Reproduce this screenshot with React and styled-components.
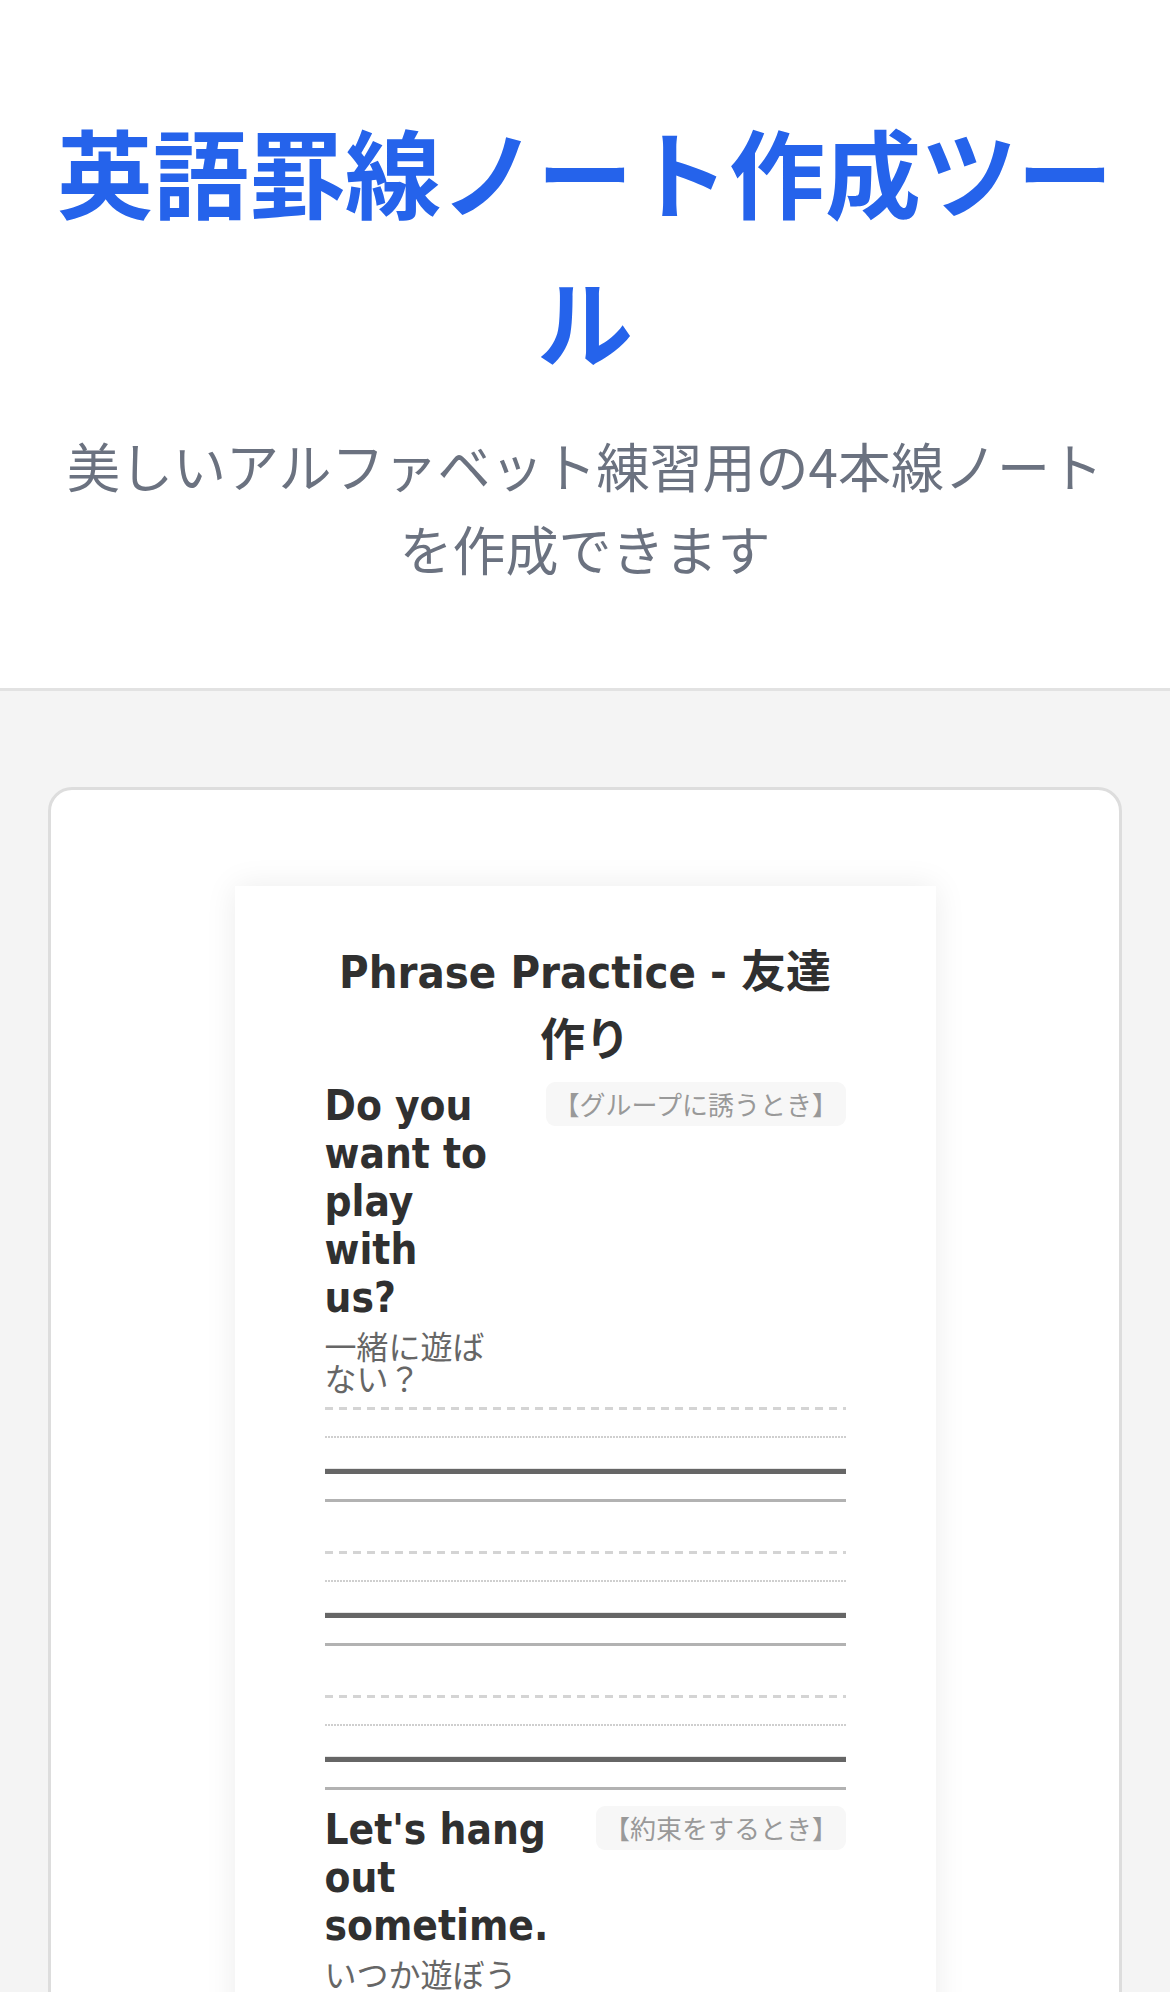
import React from "react";
import styled, { createGlobalStyle } from "styled-components";

const GlobalStyle = createGlobalStyle`
  html, body {
    margin: 0;
    padding: 0;
    background: #f4f4f4;
  }
  body {
    font-family: "Noto Sans CJK JP", "Noto Sans", sans-serif;
  }
  * { box-sizing: border-box; }
`;

const Header = styled.header`
  background: #ffffff;
  border-bottom: 3px solid #e2e2e2;
  padding: 96px 48px 98px;
  text-align: center;
`;

const Title = styled.h1`
  margin: 0 0 30px;
  font-size: 96px;
  line-height: 1.55;
  font-weight: 700;
  color: #2563eb;
`;

const Subtitle = styled.p`
  margin: 0;
  padding: 0 12px;
  font-size: 53px;
  line-height: 83px;
  color: #6b7280;
`;

const Main = styled.main`
  padding: 96px 48px;
`;

const Card = styled.section`
  background: #ffffff;
  border: 3px solid #dddddd;
  border-radius: 24px;
  padding: 96px 0;
  display: flex;
  justify-content: center;
`;

const Paper = styled.div`
  width: 701px;
  background: #ffffff;
  box-shadow: 0 0 30px rgba(0, 0, 0, 0.08);
  padding: 53px 90px 60px;
  font-family: "DejaVu Sans Condensed", "DejaVu Sans", "Noto Sans CJK JP", sans-serif;
  font-stretch: condensed;
  color: #303030;
`;

const PaperTitle = styled.h2`
  margin: 0 0 7px;
  text-align: center;
  font-size: 45px;
  line-height: 68px;
  font-weight: 700;
  color: #303030;
`;

const Phrase = styled.div`
  margin-bottom: 16px;
`;

const PhraseRow = styled.div`
  display: flex;
  align-items: flex-start;
  gap: 45px;
`;

const PhraseText = styled.div`
  flex: 1;
  min-width: 0;
`;

const English = styled.div`
  font-size: 42px;
  line-height: 48px;
  font-weight: 700;
  color: #303030;
`;

const Japanese = styled.div`
  margin-top: 7px;
  font-family: "Noto Sans CJK JP", sans-serif;
  font-size: 32px;
  line-height: 32px;
  color: #666666;
`;

const Tag = styled.span`
  flex-shrink: 0;
  margin-top: 0;
  padding: 7px 7.5px;
  border-radius: 9px;
  background: #f7f7f7;
  color: #999999;
  font-family: "Noto Sans CJK JP", sans-serif;
  font-size: 26px;
  line-height: 30px;
  white-space: nowrap;
`;

const LineSet = styled.div`
  display: flex;
  flex-direction: column;
  margin-top: ${(p) => (p.$first ? "14px" : "49px")};
`;

const DashedLine = styled.div`
  height: 3px;
  background: repeating-linear-gradient(
    to right,
    #d4d4d4 0 8px,
    transparent 8px 14px
  );
`;

const DottedLine = styled.div`
  margin-top: 26px;
  height: 2px;
  background: repeating-linear-gradient(
    to right,
    #cfcfcf 0 2px,
    transparent 2px 3px
  );
`;

const BaseLine = styled.div`
  margin-top: 31px;
  height: 5px;
  background: #666666;
  box-shadow: 0 -1px 0 #e6e6e6;
`;

const BottomLine = styled.div`
  margin-top: 25px;
  height: 3px;
  background: #b2b2b2;
`;

const WritingLines = ({ first }) => (
  <LineSet $first={first}>
    <DashedLine />
    <DottedLine />
    <BaseLine />
    <BottomLine />
  </LineSet>
);

const phrases = [
  {
    en: "Do you want to play with us?",
    ja: "一緒に遊ばない？",
    tag: "【グループに誘うとき】",
  },
  {
    en: "Let's hang out sometime.",
    ja: "いつか遊ぼう",
    tag: "【約束をするとき】",
  },
];

export default function App() {
  return (
    <>
      <GlobalStyle />
      <Header>
        <Title>英語罫線ノート作成ツール</Title>
        <Subtitle>美しいアルファベット練習用の4本線ノートを作成できます</Subtitle>
      </Header>
      <Main>
        <Card>
          <Paper>
            <PaperTitle>Phrase Practice - 友達作り</PaperTitle>
            {phrases.map((p) => (
              <Phrase key={p.en}>
                <PhraseRow>
                  <PhraseText>
                    <English>{p.en}</English>
                    <Japanese>{p.ja}</Japanese>
                  </PhraseText>
                  <Tag>{p.tag}</Tag>
                </PhraseRow>
                <WritingLines first />
                <WritingLines />
                <WritingLines />
              </Phrase>
            ))}
          </Paper>
        </Card>
      </Main>
    </>
  );
}
